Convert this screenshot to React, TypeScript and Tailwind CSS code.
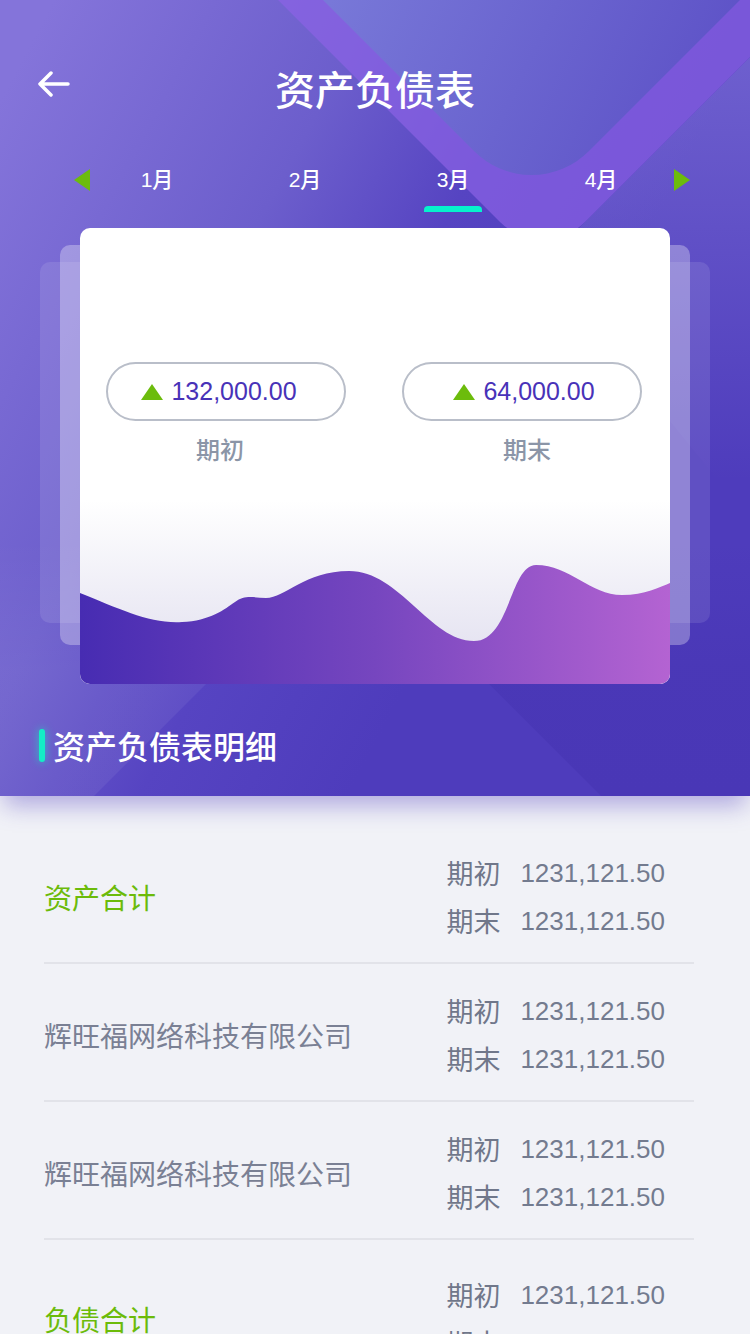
import React from 'react';

const months = ['1月', '2月', '3月', '4月'];

const pills = [
  { value: '132,000.00', label: '期初', box: 'pr-[14px]', tag: 'pr-[12px]' },
  { value: '64,000.00', label: '期末', box: 'pl-[4px]', tag: 'pl-[10px]' },
];

const rows = [
  { name: '资产合计', total: true },
  { name: '辉旺福网络科技有限公司', total: false },
  { name: '辉旺福网络科技有限公司', total: false },
  { name: '负债合计', total: true },
];

const cjk = "font-['Noto_Sans_CJK_SC',sans-serif]";

function HeaderDecor() {
  return (
    <svg className="absolute inset-0 h-full w-full" viewBox="0 0 750 796" preserveAspectRatio="none">
      <defs>
        <linearGradient id="base" gradientUnits="userSpaceOnUse" x1="0" y1="100" x2="560" y2="400">
          <stop offset="0" stopColor="#8474da" />
          <stop offset="0.45" stopColor="#6c5ecc" />
          <stop offset="0.71" stopColor="#5644c2" />
          <stop offset="1" stopColor="#4e3cbc" />
        </linearGradient>
        <linearGradient id="inner" gradientUnits="userSpaceOnUse" x1="330" y1="0" x2="700" y2="180">
          <stop offset="0" stopColor="#7878d8" />
          <stop offset="1" stopColor="#5c50c6" />
        </linearGradient>
        <linearGradient id="side" gradientUnits="userSpaceOnUse" x1="0" y1="60" x2="0" y2="480">
          <stop offset="0" stopColor="#a8a0f0" stopOpacity="0.35" />
          <stop offset="1" stopColor="#a8a0f0" stopOpacity="0" />
        </linearGradient>
        <linearGradient id="fadeLight" x1="0" y1="0" x2="0" y2="1">
          <stop offset="0" stopColor="#ffffff" stopOpacity="0" />
          <stop offset="0.5" stopColor="#ffffff" stopOpacity="0.06" />
          <stop offset="1" stopColor="#ffffff" stopOpacity="0.06" />
        </linearGradient>
        <linearGradient id="fadeDark" x1="0" y1="0" x2="0" y2="1">
          <stop offset="0" stopColor="#24128a" stopOpacity="0" />
          <stop offset="0.5" stopColor="#24128a" stopOpacity="0.1" />
          <stop offset="1" stopColor="#24128a" stopOpacity="0.12" />
        </linearGradient>
      </defs>
      <rect width="750" height="796" fill="url(#base)" />
      <path d="M750 57 L543 264 L750 520 Z" fill="url(#side)" />
      <path d="M278 0 L500 222 A60 60 0 0 0 585 222 L807 0 Z" fill="#8c62e6" fillOpacity="0.7" />
      <path d="M323 0 L474 151 A81 81 0 0 0 589 151 L740 0 Z" fill="url(#inner)" />
      <path d="M0 540 L350 540 L94 796 L0 796 Z" fill="url(#fadeLight)" />
      <path d="M345 540 L750 540 L750 796 L601 796 Z" fill="url(#fadeDark)" />
    </svg>
  );
}

function Wave() {
  return (
    <svg className="mt-auto block" width="590" height="200" viewBox="0 0 590 200">
      <defs>
        <linearGradient id="fog" x1="0" y1="0" x2="0" y2="1">
          <stop offset="0.08" stopColor="#ffffff" />
          <stop offset="1" stopColor="#dfddee" />
        </linearGradient>
        <linearGradient id="wave" x1="0" y1="0" x2="1" y2="0">
          <stop offset="0" stopColor="#472cb2" />
          <stop offset="0.5" stopColor="#7646bf" />
          <stop offset="1" stopColor="#b463d2" />
        </linearGradient>
      </defs>
      <rect width="590" height="200" fill="url(#fog)" />
      <path
        d="M0 109 C40 125 70 140 102 138 C130 137 145 125 155 118 C165 110 175 114 186 114 C205 114 225 87 269 87 C320 87 350 157 394 157 C430 157 430 81 456 81 C490 81 510 111 542 111 C565 111 580 103 590 99 L590 200 L0 200 Z"
        fill="url(#wave)"
      />
    </svg>
  );
}

function Triangle({ dir }: { dir: 'left' | 'right' }) {
  return (
    <svg width="16" height="22" viewBox="0 0 16 22">
      <path d={dir === 'left' ? 'M16 0 L0 11 L16 22 Z' : 'M0 0 L16 11 L0 22 Z'} fill="#6cbc0c" />
    </svg>
  );
}

export default function App() {
  return (
    <div className="h-[1334px] w-[750px] overflow-hidden bg-[#f1f2f7] font-['Liberation_Sans','Noto_Sans_CJK_SC',sans-serif]">
      <header className="relative z-10 h-[796px] shadow-[0_14px_22px_-4px_rgba(82,66,190,0.4)]">
        <HeaderDecor />
        <div className="relative flex h-full flex-col pt-[44px]">
          {/* nav */}
          <div className="grid h-[88px] grid-cols-[1fr_auto_1fr] items-center">
            <div className="pb-[8px] pl-[38px]">
              <svg width="32" height="26" viewBox="0 0 32 26" fill="none" stroke="white" strokeWidth="3.5" strokeLinecap="round" strokeLinejoin="round">
                <path d="M30 13 H2 M13 2 L2 13 L13 24" />
              </svg>
            </div>
            <h1 className={`${cjk} text-[40px] font-medium leading-[48px] text-white`}>资产负债表</h1>
            <div />
          </div>

          {/* months */}
          <div className="flex h-[80px] items-start pl-[74px] pt-[28px]">
            <div className="flex h-[40px] items-center">
              <Triangle dir="left" />
            </div>
            <div className="ml-[17px] flex gap-[48px]">
              {months.map((m, i) => (
                <div key={m} className="flex w-[100px] flex-col items-center">
                  <span className="h-[40px] text-[21px] font-medium leading-[40px] text-white">{m}</span>
                  <span className={`mt-[6px] h-[6px] w-[58px] rounded-t-[4px] ${i === 2 ? 'bg-[#06f2cc]' : 'bg-transparent'}`} />
                </div>
              ))}
            </div>
            <div className="ml-[23px] flex h-[40px] items-center">
              <Triangle dir="right" />
            </div>
          </div>

          {/* card stack */}
          <div className="relative mx-[80px] mt-[16px] h-[456px]">
            <div className="absolute -left-[40px] -right-[40px] top-[34px] h-[361px] rounded-[10px] bg-white/10" />
            <div className="absolute -left-[20px] -right-[20px] top-[17px] h-[400px] rounded-[10px] bg-white/30" />
            <div className="relative flex h-full flex-col overflow-hidden rounded-[10px] bg-white">
              <div className="flex justify-between pl-[26px] pr-[28px] pt-[134px]">
                {pills.map((p) => (
                  <div key={p.label} className="flex w-[240px] flex-col items-center">
                    <div className={`flex h-[59px] w-[240px] items-center justify-center gap-[8px] rounded-full border-2 border-[#b9bec9] ${p.box}`}>
                      <svg width="22" height="16" viewBox="0 0 22 16">
                        <path d="M11 0 L22 16 H0 Z" fill="#6cbc0c" />
                      </svg>
                      <span className="text-[25px] text-[#4832b8]">{p.value}</span>
                    </div>
                    <span className={`${cjk} mt-[12px] text-[24px] font-medium leading-[32px] text-[#8b95a7] ${p.tag}`}>{p.label}</span>
                  </div>
                ))}
              </div>
              <Wave />
            </div>
          </div>

          {/* section title */}
          <div className="mt-[44px] flex items-center pl-[39px]">
            <span className="h-[33px] w-[6px] rounded-full bg-[#14eec6] shadow-[0_0_8px_rgba(20,238,198,0.7)]" />
            <h2 className={`${cjk} ml-[8px] text-[32px] font-medium leading-[34px] text-white`}>资产负债表明细</h2>
          </div>
        </div>
      </header>

      <div className="pl-[44px] pr-[56px] pt-[22px]">
        {rows.map((r, i) => (
          <div
            key={i}
            className={`flex items-center justify-between border-b-2 border-[#e2e3e9] pb-[17px] ${r.total ? 'pt-[31px]' : 'pt-[23px]'}`}
          >
            <span className={`${cjk} text-[28px] ${r.total ? 'text-[#6cbb0a]' : 'text-[#7a8094]'}`}>{r.name}</span>
            <div className="mr-[29px] flex flex-col">
              {['期初', '期末'].map((k) => (
                <div key={k} className="flex h-[48px] items-center">
                  <span className={`${cjk} text-[27px] text-[#70778a]`}>{k}</span>
                  <span className="ml-[20px] text-[26px] text-[#737b8f]">1231,121.50</span>
                </div>
              ))}
            </div>
          </div>
        ))}
      </div>
    </div>
  );
}
